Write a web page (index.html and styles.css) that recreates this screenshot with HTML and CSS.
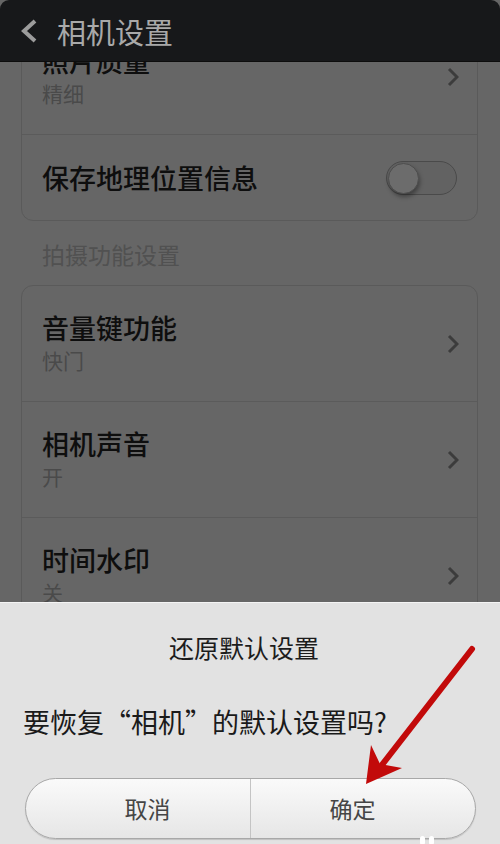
FILE: index.html
```html
<!DOCTYPE html>
<html>
<head>
<meta charset="utf-8">
<link rel="stylesheet" href="styles.css">
</head>
<body>
<div class="screen">
  <div class="header">
    <svg class="back" width="18" height="26" viewBox="0 0 18 26"><path d="M15 3 L4 13 L15 23" fill="none" stroke="#9c9c9c" stroke-width="4"/></svg>
    <div class="htitle">相机设置</div>
  </div>

  <div class="viewport">
    <div class="content">
      <div class="card">
        <div class="row">
          <div class="texts">
            <div class="title">照片质量</div>
            <div class="sub">精细</div>
          </div>
          <svg class="chev" width="12" height="20" viewBox="0 0 12 20"><path d="M2 2 L10 10 L2 18" fill="none" stroke="#3c3c3c" stroke-width="3"/></svg>
        </div>
        <div class="row short">
          <div class="title">保存地理位置信息</div>
          <div class="toggle"><div class="knob"></div></div>
        </div>
      </div>
      <div class="section">拍摄功能设置</div>
      <div class="card">
        <div class="row">
          <div class="texts">
            <div class="title">音量键功能</div>
            <div class="sub">快门</div>
          </div>
          <svg class="chev" width="12" height="20" viewBox="0 0 12 20"><path d="M2 2 L10 10 L2 18" fill="none" stroke="#3c3c3c" stroke-width="3"/></svg>
        </div>
        <div class="row">
          <div class="texts">
            <div class="title">相机声音</div>
            <div class="sub">开</div>
          </div>
          <svg class="chev" width="12" height="20" viewBox="0 0 12 20"><path d="M2 2 L10 10 L2 18" fill="none" stroke="#3c3c3c" stroke-width="3"/></svg>
        </div>
        <div class="row">
          <div class="texts">
            <div class="title">时间水印</div>
            <div class="sub">关</div>
          </div>
          <svg class="chev" width="12" height="20" viewBox="0 0 12 20"><path d="M2 2 L10 10 L2 18" fill="none" stroke="#3c3c3c" stroke-width="3"/></svg>
        </div>
      </div>
    </div>
  </div>

  <div class="dialog">
    <div class="dtitle">还原默认设置</div>
    <div class="dmsg">要恢复“相机”的默认设置吗?</div>
    <div class="buttons">
      <div class="btn left">取消</div>
      <div class="btn right">确定</div>
    </div>
    <div class="dots"><span></span><span></span></div>
  </div>

  <svg class="arrow" width="500" height="844" viewBox="0 0 500 844">
    <line x1="472" y1="649" x2="378" y2="770" stroke="#c20a0a" stroke-width="6" stroke-linecap="round"/>
    <polygon points="366,784 371,745 380,764 402,768" fill="#c20a0a"/>
  </svg>
</div>
</body>
</html>
```
FILE: styles.css
```css
* { box-sizing: border-box; }
html, body { margin: 0; padding: 0; }
body {
  width: 500px;
  height: 844px;
  overflow: hidden;
  background: #2e2e2e;
  font-family: "Noto Sans CJK SC", "Noto Sans", sans-serif;
}
.screen {
  position: relative;
  width: 500px;
  height: 844px;
  background: #666666;
  overflow: hidden;
  display: flex;
  flex-direction: column;
}
.header {
  flex: none;
  width: 500px;
  height: 62px;
  background: #17181a;
  border-radius: 9px 9px 0 0;
  display: flex;
  align-items: center;
  padding-left: 20px;
  border-bottom: 1px solid #0d0d0d;
}
.htitle {
  margin-left: 19px;
  font-size: 29px;
  color: #a9a9a9;
  line-height: 36px;
}
.viewport {
  flex: 1;
  overflow: hidden;
}
.content {
  margin-top: -44px;
  padding: 0 22px 0 21px;
}
.card {
  border: 1px solid #5a5a5a;
  border-radius: 12px;
  background: #666666;
}
.row {
  height: 116px;
  display: flex;
  align-items: center;
  padding: 0 20px 0 20px;
  border-top: 1px solid #5b5b5b;
}
.row:first-child { border-top: none; height: 115px; }
.row.short { height: 86px; }
.texts {
  flex: 1;
  display: flex;
  flex-direction: column;
  padding-bottom: 4px;
}
.title {
  flex: 1;
  font-size: 27px;
  line-height: 34px;
  font-weight: 500;
  color: #0e0e0e;
}
.sub {
  font-size: 21px;
  line-height: 26px;
  margin-top: 2px;
  color: #4a4a4a;
}
.chev { flex: none; margin-right: -2px; }
.toggle {
  position: relative;
  width: 71px;
  height: 34px;
  border: 1.5px solid #4a4a4a;
  border-radius: 17px;
  background: #626262;
  flex: none;
}
.knob {
  position: absolute;
  left: 1px;
  top: 1px;
  width: 31px;
  height: 31px;
  border-radius: 50%;
  background: #6c6c6c;
  border: 1px solid #4e4e4e;
  box-shadow: 1px 3px 4px rgba(0,0,0,0.35);
}
.section {
  height: 64px;
  display: flex;
  align-items: center;
  padding-left: 21px;
  font-size: 23px;
  color: #515151;
  padding-top: 2px;
}
.dialog {
  position: absolute;
  left: 0;
  top: 602px;
  width: 500px;
  height: 242px;
  background: #e2e2e2;
  border-top: 1px solid #f4f4f4;
  display: flex;
  flex-direction: column;
  align-items: center;
}
.dtitle {
  margin-top: 27px;
  margin-right: 12px;
  font-size: 25px;
  line-height: 34px;
  color: #1c1c1c;
}
.dmsg {
  align-self: flex-start;
  margin-left: 23px;
  margin-top: 39px;
  font-size: 27px;
  line-height: 38px;
  color: #1a1a1a;
}
.buttons {
  margin-top: 37px;
  width: 451px;
  height: 61px;
  border: 1px solid #a8a8a8;
  border-radius: 31px;
  display: flex;
  overflow: hidden;
  background: linear-gradient(#fafafa, #e6e6e6);
  box-shadow: 0 1px 1px rgba(0,0,0,0.15);
}
.btn {
  flex: 1;
  display: flex;
  align-items: center;
  justify-content: center;
  font-size: 23px;
  color: #454545;
  padding-bottom: 2px;
}
.btn.left { padding-left: 20px; }
.btn.right { padding-right: 20px; border-left: 1px solid #c4c4c4; }
.dots {
  position: absolute;
  left: 420px;
  top: 233px;
  display: flex;
  gap: 4px;
}
.dots span {
  width: 5px;
  height: 9px;
  border-radius: 3px;
  background: #ffffff;
}
.arrow {
  position: absolute;
  left: 0;
  top: 0;
  pointer-events: none;
}
```
